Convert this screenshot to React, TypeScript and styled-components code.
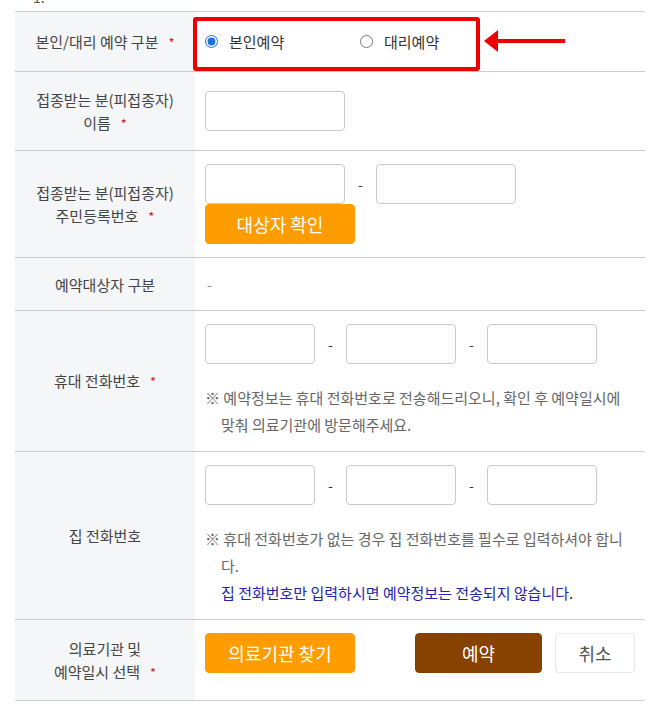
import styled, { createGlobalStyle } from 'styled-components'

const GlobalStyle = createGlobalStyle`
  body {
    margin: 0;
    background: #fff;
    font-family: "Noto Sans CJK KR", "Noto Sans", sans-serif;
    color: #333;
  }
`

const Page = styled.div`
  padding-left: 15px;
  width: 630px;
`

const Cut = styled.div`
  height: 11px;
  overflow: hidden;
  padding-left: 18px;
  font-size: 14px;
  line-height: 20px;
  color: #555;
  span {
    display: block;
    margin-top: -13px;
  }
`

const Table = styled.div`
  border-top: 1px solid #cccccc;
`

const Row = styled.div`
  display: grid;
  grid-template-columns: 180px 1fr;
  border-bottom: 1px solid #cccccc;
`

const Label = styled.div`
  background: #f5f6f8;
  display: flex;
  align-items: center;
  justify-content: center;
  text-align: center;
  font-size: 15px;
  line-height: 23px;
  color: #444;
  padding: 0 10px;
`

const Star = styled.span`
  color: #e0202a;
  margin-left: 10px;
  font-size: 13px;
`

const Value = styled.div<{ $py?: number; $minH?: number; $center?: boolean }>`
  position: relative;
  padding: ${p => p.$py ?? 13}px 10px;
  min-height: ${p => p.$minH ?? 0}px;
  box-sizing: border-box;
  display: flex;
  flex-direction: column;
  justify-content: ${p => (p.$center ? 'center' : 'flex-start')};
  align-items: flex-start;
`

const RadioGroup = styled.div`
  display: flex;
  align-items: center;
`

const RadioOption = styled.label`
  width: 155px;
  display: flex;
  align-items: center;
  font-size: 15px;
  color: #333;
  input {
    width: 13px;
    height: 13px;
    margin: 0 11px 0 0;
    accent-color: #1a73e8;
  }
`

const Highlight = styled.div`
  position: absolute;
  left: -2px;
  top: 5px;
  width: 287px;
  height: 54px;
  box-sizing: border-box;
  border: 4px solid #ee0000;
  border-radius: 3px;
  pointer-events: none;
`

const Arrow = styled.svg`
  position: absolute;
  left: 289px;
  top: 17px;
`

const Fields = styled.div`
  display: flex;
  align-items: center;
`

const Input = styled.input<{ $w?: number }>`
  width: ${p => p.$w ?? 140}px;
  height: 40px;
  box-sizing: border-box;
  border: 1px solid #c8c8c8;
  border-radius: 4px;
  background: #fff;
  margin: 0;
  padding: 0 8px;
`

const Dash = styled.span`
  width: 31px;
  text-align: center;
  font-size: 14px;
  color: #333;
`

const Button = styled.button<{ $variant: 'orange' | 'brown' | 'plain'; $w: number }>`
  width: ${p => p.$w}px;
  height: 40px;
  border-radius: 4px;
  font-family: inherit;
  font-size: 18px;
  padding: 0;
  cursor: pointer;
  border: 1px solid
    ${p => (p.$variant === 'orange' ? '#ff9d00' : p.$variant === 'brown' ? '#874100' : '#e6e6e6')};
  background: ${p => (p.$variant === 'orange' ? '#ff9d00' : p.$variant === 'brown' ? '#874100' : '#fff')};
  color: ${p => (p.$variant === 'plain' ? '#555' : '#fff')};
`

const Plain = styled.span`
  font-size: 14px;
  color: #888;
  padding-left: 2px;
`

const Notes = styled.div`
  margin-top: 20px;
  font-size: 15px;
  line-height: 27px;
  color: #666;
  width: 430px;
`

const Note = styled.p<{ $blue?: boolean }>`
  margin: 0;
  padding-left: 16px;
  text-indent: ${p => (p.$blue ? 0 : -16)}px;
  color: ${p => (p.$blue ? '#2323b0' : '#666')};
`

const Actions = styled.div`
  width: 100%;
  display: flex;
  justify-content: space-between;
  align-items: center;
`

const ActionGroup = styled.div`
  display: flex;
  gap: 13px;
`

const PhoneFields = () => (
  <Fields>
    <Input $w={110} />
    <Dash>-</Dash>
    <Input $w={110} />
    <Dash>-</Dash>
    <Input $w={110} />
  </Fields>
)

export default function App() {
  return (
    <Page>
      <GlobalStyle />
      <Cut>
        <span>1.</span>
      </Cut>
      <Table>
        <Row>
          <Label>
            <span>
              본인/대리 예약 구분<Star>*</Star>
            </span>
          </Label>
          <Value $py={0} $minH={59} $center>
            <RadioGroup>
              <RadioOption>
                <input type="radio" name="kind" defaultChecked />
                본인예약
              </RadioOption>
              <RadioOption>
                <input type="radio" name="kind" />
                대리예약
              </RadioOption>
            </RadioGroup>
            <Highlight />
            <Arrow width="82" height="24" viewBox="0 0 82 24">
              <polygon points="0,12 14,1 14,23" fill="#ee0000" />
              <rect x="13" y="10" width="68" height="4" fill="#ee0000" />
            </Arrow>
          </Value>
        </Row>
        <Row>
          <Label>
            <span>
              접종받는 분(피접종자)
              <br />
              이름<Star>*</Star>
            </span>
          </Label>
          <Value $py={19}>
            <Input />
          </Value>
        </Row>
        <Row>
          <Label>
            <span>
              접종받는 분(피접종자)
              <br />
              주민등록번호<Star>*</Star>
            </span>
          </Label>
          <Value>
            <Fields>
              <Input />
              <Dash>-</Dash>
              <Input />
            </Fields>
            <Button $variant="orange" $w={150}>대상자 확인</Button>
          </Value>
        </Row>
        <Row>
          <Label>예약대상자 구분</Label>
          <Value $py={0} $minH={52} $center>
            <Plain>-</Plain>
          </Value>
        </Row>
        <Row>
          <Label>
            <span>
              휴대 전화번호<Star>*</Star>
            </span>
          </Label>
          <Value>
            <PhoneFields />
            <Notes>
              <Note>※ 예약정보는 휴대 전화번호로 전송해드리오니, 확인 후 예약일시에 맞춰 의료기관에 방문해주세요.</Note>
            </Notes>
          </Value>
        </Row>
        <Row>
          <Label>집 전화번호</Label>
          <Value>
            <PhoneFields />
            <Notes>
              <Note>※ 휴대 전화번호가 없는 경우 집 전화번호를 필수로 입력하셔야 합니다.</Note>
              <Note $blue>집 전화번호만 입력하시면 예약정보는 전송되지 않습니다.</Note>
            </Notes>
          </Value>
        </Row>
        <Row>
          <Label>
            <span>
              의료기관 및
              <br />
              예약일시 선택<Star>*</Star>
            </span>
          </Label>
          <Value $py={13} $minH={80}>
            <Actions>
              <Button $variant="orange" $w={150}>의료기관 찾기</Button>
              <ActionGroup>
                <Button $variant="brown" $w={127}>예약</Button>
                <Button $variant="plain" $w={80}>취소</Button>
              </ActionGroup>
            </Actions>
          </Value>
        </Row>
      </Table>
    </Page>
  )
}
